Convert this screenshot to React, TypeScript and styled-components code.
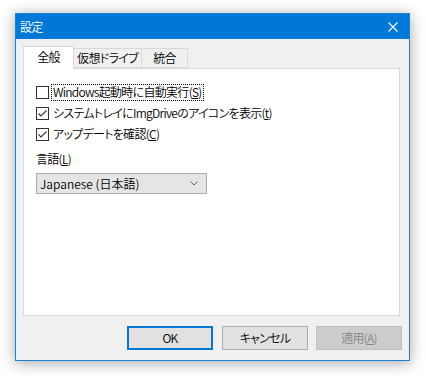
import React, { useState } from "react";
import styled, { createGlobalStyle } from "styled-components";

//#region Styles
const GlobalStyle = createGlobalStyle`
  html, body {
    margin: 0;
    padding: 0;
    background: #ffffff;
  }
  body {
    font-family: "Noto Sans CJK JP", "Noto Sans", sans-serif;
    font-size: 12px;
    font-weight: 350;
    letter-spacing: -0.7px;
    font-feature-settings: "palt";
  }
`;

const Page = styled.div`
  width: 426px;
  height: 376px;
  padding: 13px 0 0 15px;
  box-sizing: border-box;
`;

const Window = styled.div`
  width: 395px;
  height: 348px;
  box-sizing: border-box;
  border: 1px solid #1883d7;
  background: #f0f0f0;
  box-shadow: 0 2px 14px rgba(0, 0, 0, 0.35);
  display: flex;
  flex-direction: column;
`;

const TitleBar = styled.div`
  height: 25px;
  background: #0078d7;
  color: #ffffff;
  display: flex;
  align-items: center;
  justify-content: space-between;
  padding: 0 11px 0 4px;
  line-height: 1;
`;

const CloseIcon = styled.svg`
  display: block;
`;

const Body = styled.div`
  flex: 1;
  display: flex;
  flex-direction: column;
  padding: 8px 9px 9px 7px;
`;

const TabStrip = styled.div`
  display: flex;
  align-items: flex-end;
  height: 22px;
  position: relative;
  z-index: 1;
  margin-bottom: -1px;
`;

const Tab = styled.div<{ $active?: boolean; $width: number }>`
  box-sizing: border-box;
  width: ${(p) => p.$width}px;
  height: ${(p) => (p.$active ? "23px" : "20px")};
  margin-left: ${(p) => (p.$active ? "0" : "-1px")};
  margin-bottom: ${(p) => (p.$active ? "0" : "1px")};
  background: ${(p) => (p.$active ? "#ffffff" : "#f0f0f0")};
  border: 1px solid #d9d9d9;
  border-bottom: ${(p) => (p.$active ? "none" : "1px solid #d9d9d9")};
  color: #000000;
  display: flex;
  align-items: center;
  justify-content: center;
  line-height: 1;
  padding-bottom: ${(p) => (p.$active ? "2px" : "0")};
  &:first-child {
    z-index: 2;
  }
`;

const Panel = styled.div`
  height: 248px;
  box-sizing: border-box;
  background: #ffffff;
  border: 1px solid #d9d9d9;
  padding: 17px 12px 0 12px;
  display: flex;
  flex-direction: column;
`;

const CheckRow = styled.label`
  display: flex;
  align-items: center;
  height: 13px;
  margin-bottom: 8px;
  line-height: 1;
  color: #000000;
`;

const Box = styled.span`
  width: 13px;
  height: 13px;
  box-sizing: border-box;
  border: 1px solid #333333;
  background: #ffffff;
  display: flex;
  align-items: center;
  justify-content: center;
  margin-right: 3px;
  flex-shrink: 0;
`;

const RowText = styled.span<{ $focused?: boolean }>`
  padding: 1px 1px 2px 1px;
  outline: ${(p) => (p.$focused ? "1px dotted #000000" : "none")};
  outline-offset: 0;
  white-space: nowrap;
`;

const Key = styled.span`
  text-decoration: underline;
  text-underline-offset: 1px;
`;

const FieldLabel = styled.div`
  margin-top: 3px;
  height: 14px;
  line-height: 14px;
`;

const Select = styled.div`
  margin-top: 7px;
  width: 171px;
  height: 21px;
  box-sizing: border-box;
  border: 1px solid #acacac;
  background: #e5e5e5;
  display: flex;
  align-items: center;
  justify-content: space-between;
  padding: 0 8px 0 3px;
  line-height: 1;
  letter-spacing: 0;
`;

const Footer = styled.div`
  display: flex;
  justify-content: flex-end;
  gap: 8px;
  margin: 10px -2px 0 0;
`;

const Button = styled.button<{ $variant?: "default" | "disabled" }>`
  width: 86px;
  height: 24px;
  box-sizing: border-box;
  font: inherit;
  letter-spacing: inherit;
  font-feature-settings: "palt";
  line-height: 1;
  padding: 0;
  cursor: default;
  margin-right: ${(p) => (p.$variant === "default" ? "1px" : "0")};
  background: ${(p) => (p.$variant === "disabled" ? "#cccccc" : "#e1e1e1")};
  color: ${(p) => (p.$variant === "disabled" ? "#838383" : "#000000")};
  border: ${(p) =>
    p.$variant === "default"
      ? "2px solid #0078d7"
      : p.$variant === "disabled"
      ? "1px solid #bfbfbf"
      : "1px solid #adadad"};
`;
//#endregion

const Check = () => (
  <svg width="11" height="11" viewBox="0 0 11 11">
    <polyline points="1.5,5.5 4,8 9.5,2.5" fill="none" stroke="#333" strokeWidth="1.1" />
  </svg>
);

interface OptionProps {
  checked: boolean;
  focused?: boolean;
  children: React.ReactNode;
}

const Option = ({ checked, focused, children }: OptionProps) => (
  <CheckRow>
    <Box>{checked && <Check />}</Box>
    <RowText $focused={focused}>{children}</RowText>
  </CheckRow>
);

const tabs = [
  { label: "全般", width: 51 },
  { label: "仮想ドライブ", width: 69 },
  { label: "統合", width: 47 },
];

const App = () => {
  const [tab] = useState(0);

  return (
    <Page>
      <GlobalStyle />
      <Window>
        <TitleBar>
          <span>設定</span>
          <CloseIcon width="10" height="10" viewBox="0 0 10 10">
            <path d="M0.5 0.5 L9.5 9.5 M9.5 0.5 L0.5 9.5" stroke="#ffffff" strokeWidth="1.1" />
          </CloseIcon>
        </TitleBar>
        <Body>
          <TabStrip>
            {tabs.map((t, i) => (
              <Tab key={t.label} $active={i === tab} $width={t.width}>
                {t.label}
              </Tab>
            ))}
          </TabStrip>
          <Panel>
            <Option checked={false} focused>
              Windows起動時に自動実行(<Key>S</Key>)
            </Option>
            <Option checked>
              システムトレイにImgDriveのアイコンを表示(<Key>t</Key>)
            </Option>
            <Option checked>
              アップデートを確認(<Key>C</Key>)
            </Option>
            <FieldLabel>
              言語(<Key>L</Key>)
            </FieldLabel>
            <Select>
              <span>Japanese (日本語)</span>
              <svg width="8" height="5" viewBox="0 0 8 5">
                <polyline points="0.5,0.5 4,4 7.5,0.5" fill="none" stroke="#606060" strokeWidth="1" />
              </svg>
            </Select>
          </Panel>
          <Footer>
            <Button $variant="default">OK</Button>
            <Button>キャンセル</Button>
            <Button $variant="disabled">
              適用(<Key>A</Key>)
            </Button>
          </Footer>
        </Body>
      </Window>
    </Page>
  );
};

export default App;
